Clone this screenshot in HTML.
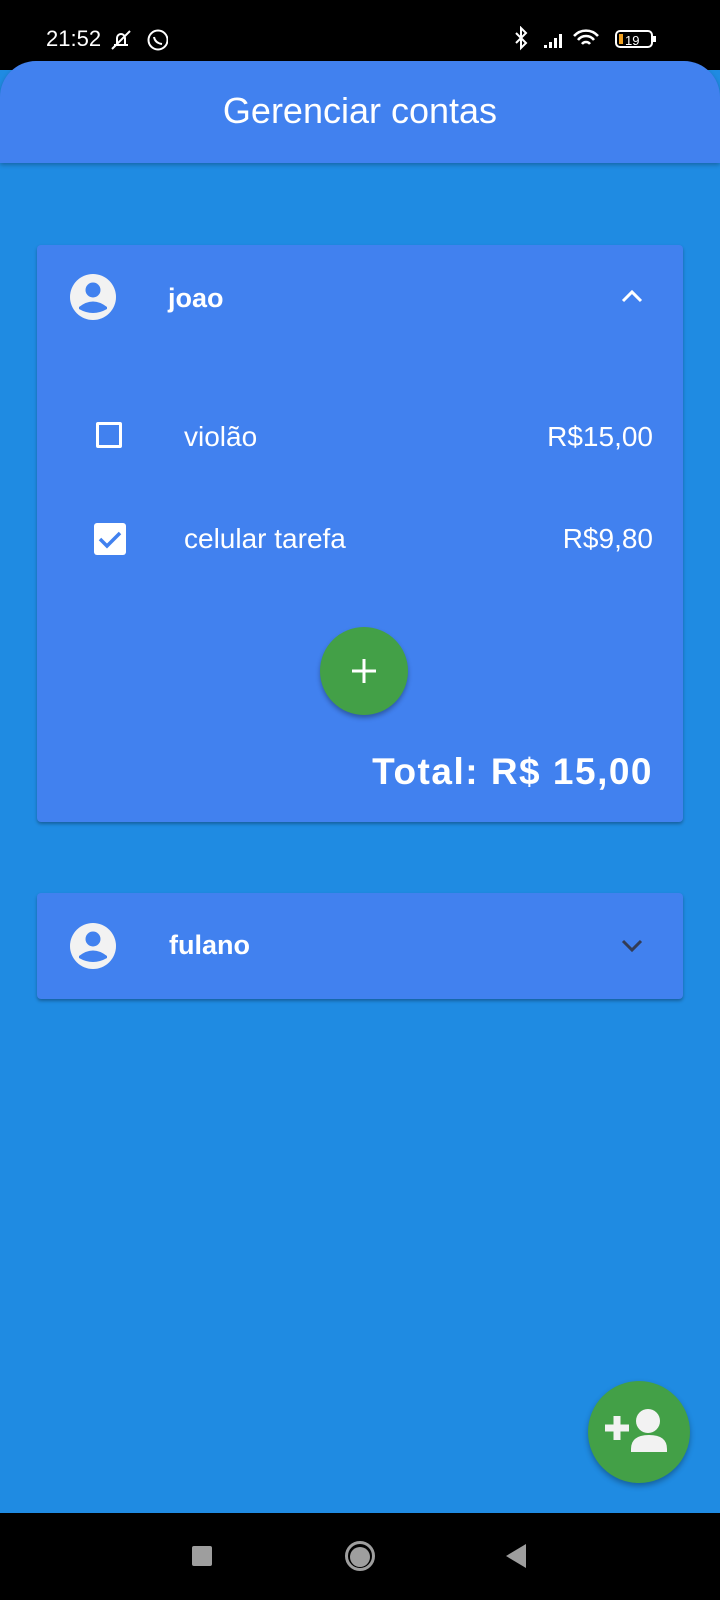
<!DOCTYPE html><html><head><meta charset="utf-8"><style>
body{margin:0;width:720px;height:1600px;background:#1f8be2;font-family:"Liberation Sans",sans-serif;position:relative;overflow:hidden;color:#fff}
.a{position:absolute}
.card{position:absolute;left:37px;width:646px;background:#4181ef;border-radius:4px;box-shadow:0 2px 3px rgba(0,0,0,.3)}
</style></head><body>
<div class="a" style="left:0;top:0;width:720px;height:70px;background:#000"></div>
<div class="a" style="left:46px;top:26px;font-size:22px">21:52</div>
<svg class="a" style="left:108px;top:27px" width="60" height="26"><path d="M6 18h14M9 18v-7a4 4 0 0 1 8 0v7M4 22L22 4" stroke="#fff" stroke-width="2" fill="none"/><circle cx="50" cy="13" r="9.5" stroke="#fff" stroke-width="2" fill="none"/><path d="M46 10q1 6 8 7" stroke="#fff" stroke-width="2" fill="none"/></svg>
<svg class="a" style="left:512px;top:26px" width="160" height="26"><path d="M4 7l10 10-5 5V2l5 5L4 17" stroke="#fff" stroke-width="2" fill="none"/><path d="M32 22h3v-3h-3zM37 22h3v-6h-3zM42 22h3v-10h-3zM47 22h3v-14h-3z" fill="#fff"/><path d="M62 10a16 16 0 0 1 24 0M66 14a10 10 0 0 1 16 0M70 18a5 5 0 0 1 8 0" stroke="#fff" stroke-width="2.5" fill="none"/><rect x="104" y="5" width="36" height="16" rx="4" stroke="#fff" stroke-width="2" fill="none"/><rect x="107" y="8" width="4" height="10" fill="#f0a020"/><rect x="141" y="10" width="3" height="6" fill="#fff"/><text x="113" y="19" font-size="13" fill="#fff" font-family="Liberation Sans">19</text></svg>
<div class="a" style="left:0;top:61px;width:720px;height:102px;background:#4181ef;border-radius:36px 36px 0 0;box-shadow:0 2px 4px rgba(0,0,0,.25)"></div>
<div class="a" style="left:0;top:90px;width:720px;text-align:center;font-size:36px">Gerenciar contas</div>
<div class="card" style="top:245px;height:577px"></div>
<svg class="a" style="left:69px;top:273px" width="48" height="48"><circle cx="24" cy="24" r="23" fill="#f2f2f2"/><circle cx="24" cy="17" r="7.5" fill="#4181ef"/><path d="M10 34q14-11 28 0v2q-14 8-28 0z" fill="#4181ef"/></svg>
<div class="a" style="left:168px;top:283px;font-size:27px;font-weight:bold">joao</div>
<svg class="a" style="left:620px;top:288px" width="24" height="16"><path d="M3 13l9-9 9 9" stroke="#fff" stroke-width="3" fill="none"/></svg>
<div class="a" style="left:96px;top:422px;width:26px;height:26px;border:3px solid #fff;border-radius:2px;box-sizing:border-box"></div>
<div class="a" style="left:184px;top:421px;font-size:28px">violão</div>
<div class="a" style="right:67px;top:421px;font-size:28px">R$15,00</div>
<svg class="a" style="left:94px;top:523px" width="32" height="32"><rect x="0" y="0" width="32" height="32" rx="3" fill="#fff"/><path d="M6 16l7 7 13-13" stroke="#4181ef" stroke-width="3.5" fill="none"/></svg>
<div class="a" style="left:184px;top:523px;font-size:28px">celular tarefa</div>
<div class="a" style="right:67px;top:523px;font-size:28px">R$9,80</div>
<div class="a" style="left:320px;top:627px;width:88px;height:88px;border-radius:50%;background:#43a047;box-shadow:0 3px 5px rgba(0,0,0,.3)"></div>
<svg class="a" style="left:350px;top:657px" width="28" height="28"><path d="M14 2v24M2 14h24" stroke="#fff" stroke-width="3"/></svg>
<div class="a" style="right:67px;top:751px;font-size:37px;font-weight:bold;letter-spacing:1.5px">Total: R$ 15,00</div>
<div class="card" style="top:893px;height:106px"></div>
<svg class="a" style="left:69px;top:922px" width="48" height="48"><circle cx="24" cy="24" r="23" fill="#f2f2f2"/><circle cx="24" cy="17" r="7.5" fill="#4181ef"/><path d="M10 34q14-11 28 0v2q-14 8-28 0z" fill="#4181ef"/></svg>
<div class="a" style="left:169px;top:930px;font-size:27px;font-weight:bold">fulano</div>
<svg class="a" style="left:620px;top:938px" width="24" height="16"><path d="M3 3l9 9 9-9" stroke="#333c55" stroke-width="3" fill="none"/></svg>
<div class="a" style="left:588px;top:1381px;width:102px;height:102px;border-radius:50%;background:#43a047;box-shadow:0 3px 6px rgba(0,0,0,.3)"></div>
<svg class="a" style="left:600px;top:1405px" width="80" height="54"><path d="M5 23h24M17 11v24" stroke="#f2f2f2" stroke-width="7"/><circle cx="48" cy="16" r="12" fill="#f2f2f2"/><path d="M31 44q0-14 18-14t18 14v3H31z" fill="#f2f2f2"/></svg>
<div class="a" style="left:0;top:1513px;width:720px;height:87px;background:#000"></div>
<div class="a" style="left:192px;top:1546px;width:20px;height:20px;background:#9e9e9e;border-radius:2px"></div>
<div class="a" style="left:345px;top:1541px;width:24px;height:24px;border:3px solid #9e9e9e;border-radius:50%"></div>
<div class="a" style="left:350px;top:1546px;width:20px;height:20px;background:#9e9e9e;border-radius:50%;margin:1px 0 0 0"></div>
<svg class="a" style="left:505px;top:1543px" width="22" height="26"><path d="M21 1v24L1 13z" fill="#9e9e9e"/></svg>
</body></html>
